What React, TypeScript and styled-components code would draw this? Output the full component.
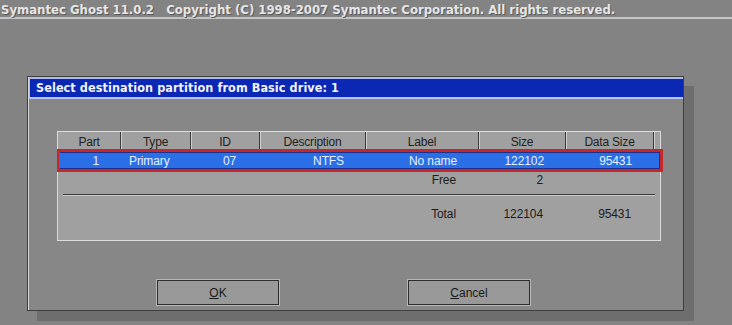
import React from "react";
import styled, { createGlobalStyle } from "styled-components";

const GlobalStyle = createGlobalStyle`
  html, body { margin: 0; padding: 0; background: #838383; }
  body { width: 732px; height: 325px; overflow: hidden; }
`;

const COLS = "63px 70px 69px 106px 113px 87px 88px 8px";

const Screen = styled.div`
  width: 732px;
  height: 325px;
  background: #838383;
  display: flex;
  flex-direction: column;
  font-family: "Liberation Sans", Arial, sans-serif;
`;

const TopBar = styled.div`
  height: 19px;
  box-sizing: border-box;
  padding: 2px 0 0 1px;
  border-bottom: 2px solid #c4c4c4;
  font-family: "DejaVu Sans Condensed", "DejaVu Sans", sans-serif;
  font-weight: bold;
  font-size: 13px;
  line-height: 15px;
  color: #e6e6e6;
  text-shadow: 1px 1px 0 #5a5a5a;
  white-space: pre;
`;

const Stage = styled.div`
  flex: 1;
  padding: 57px 0 0 27px;
`;

const Dialog = styled.div`
  width: 657px;
  height: 235px;
  box-sizing: border-box;
  background: #878787;
  border: 1px solid #3e3e3e;
  box-shadow: inset 1px 1px 0 #d8d8d8, 10px 10px 0 #6e6e6e;
  display: flex;
  flex-direction: column;
`;

const TitleBar = styled.div`
  height: 22px;
  box-sizing: border-box;
  margin: 0 0 0 1px;
  background: #0a28b4;
  border-top: 2px solid #a9b8f0;
  border-bottom: 2px solid #b9c4ee;
  border-left: 1px solid #a9b8f0;
  padding-left: 6px;
  font-family: "DejaVu Sans Condensed", "DejaVu Sans", sans-serif;
  font-weight: bold;
  font-size: 12.5px;
  line-height: 18px;
  color: #f2f2ff;
  letter-spacing: 0.1px;
`;

const Body = styled.div`
  flex: 1;
  display: flex;
  flex-direction: column;
  padding: 32px 0 0 29px;
`;

const Panel = styled.div`
  width: 604px;
  height: 110px;
  box-sizing: border-box;
  background: #a0a0a0;
  border: 1px solid #dcdcdc;
  display: flex;
  flex-direction: column;
  font-size: 12px;
  color: #1c1c1c;
`;

const Row = styled.div<{ $h: number }>`
  display: grid;
  grid-template-columns: ${COLS};
  height: ${(p) => p.$h}px;
  align-items: center;
`;

const HeadCell = styled.div<{ $last?: boolean }>`
  height: 100%;
  display: flex;
  align-items: center;
  justify-content: center;
  box-sizing: border-box;
  padding-top: 3px;
  border-right: ${(p) => (p.$last ? "none" : "1px solid #3a3a3a")};
  box-shadow: ${(p) => (p.$last ? "none" : "1px 0 0 #d0d0d0")};
  color: #202020;
  letter-spacing: -0.2px;
`;

const Selected = styled.div`
  margin: 0 -3px 0 -1px;
  height: 23px;
  box-sizing: border-box;
  border: 3px solid #c4282c;
  background: #1c2f8a;
  padding: 1px;
`;

const SelectedInner = styled.div`
  height: 100%;
  background: #2a6fe6;
  display: grid;
  grid-template-columns: ${COLS};
  align-items: center;
  color: #e6f2ff;
  margin-left: -2px;
`;

const Cell = styled.div<{ $align?: "left" | "right" | "center" }>`
  text-align: ${(p) => p.$align || "right"};
  padding: ${(p) =>
    p.$align === "left" ? "0 0 0 7px" : p.$align === "center" ? "0 0 0 6px" : "0 23px 0 0"};
  white-space: nowrap;
  letter-spacing: -0.1px;
`;

const Separator = styled.div`
  margin: 6px 5px 0 5px;
  height: 1px;
  background: #3c3c3c;
  border-bottom: 1px solid #c8c8c8;
`;

const ButtonRow = styled.div`
  display: flex;
  gap: 129px;
  margin-top: 39px;
  padding-left: 100px;
`;

const Button = styled.div`
  width: 122px;
  height: 25px;
  box-sizing: border-box;
  background: #999999;
  border: 1px solid #2e2e2e;
  box-shadow: 0 0 0 1px #b8b8b8;
  display: flex;
  align-items: center;
  justify-content: center;
  font-size: 12px;
  color: #1a1a1a;
`;

const Key = styled.span`
  text-decoration: underline;
`;

const headers = ["Part", "Type", "ID", "Description", "Label", "Size", "Data Size"];

export default function App() {
  return (
    <Screen>
      <GlobalStyle />
      <TopBar>{"Symantec Ghost 11.0.2   Copyright (C) 1998-2007 Symantec Corporation. All rights reserved."}</TopBar>
      <Stage>
        <Dialog>
          <TitleBar>Select destination partition from Basic drive: 1</TitleBar>
          <Body>
            <Panel>
              <Row $h={17}>
                {headers.map((h) => (
                  <HeadCell key={h}>{h}</HeadCell>
                ))}
                <HeadCell $last />
              </Row>
              <Selected>
                <SelectedInner>
                  <Cell>1</Cell>
                  <Cell $align="left">Primary</Cell>
                  <Cell $align="center">07</Cell>
                  <Cell>NTFS</Cell>
                  <Cell>No name</Cell>
                  <Cell>122102</Cell>
                  <Cell>95431</Cell>
                  <div />
                </SelectedInner>
              </Selected>
              <Row $h={16}>
                <div />
                <div />
                <div />
                <div />
                <Cell>Free</Cell>
                <Cell>2</Cell>
                <div />
                <div />
              </Row>
              <Separator />
              <Row $h={36}>
                <div />
                <div />
                <div />
                <div />
                <Cell>Total</Cell>
                <Cell>122104</Cell>
                <Cell>95431</Cell>
                <div />
              </Row>
            </Panel>
            <ButtonRow>
              <Button>
                <Key>O</Key>K
              </Button>
              <Button>
                <Key>C</Key>ancel
              </Button>
            </ButtonRow>
          </Body>
        </Dialog>
      </Stage>
    </Screen>
  );
}
